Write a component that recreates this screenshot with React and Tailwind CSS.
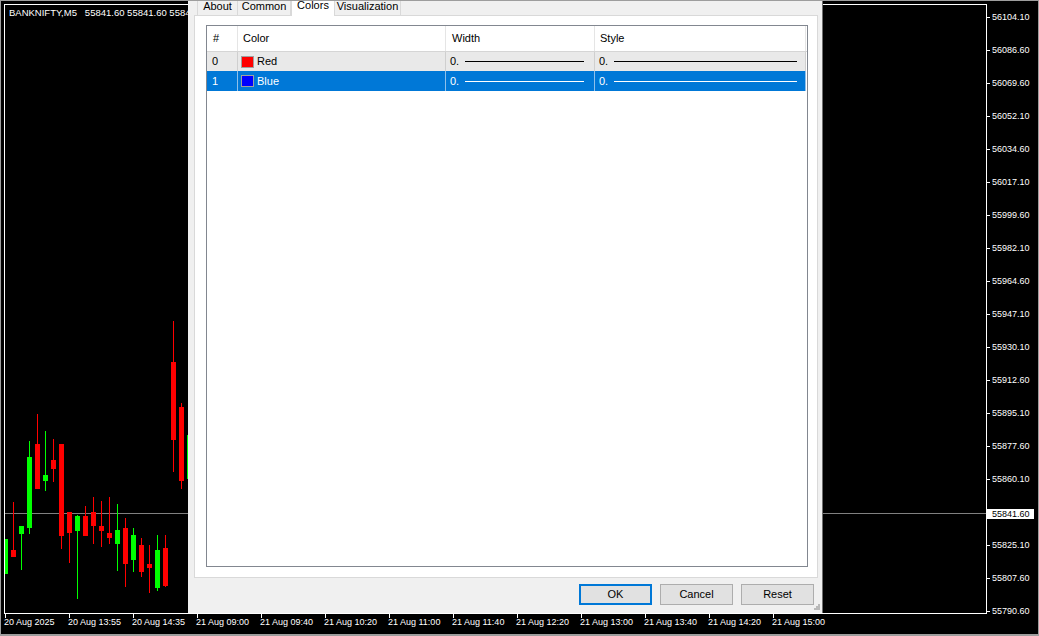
import React from 'react'

const PRICES = [
  '56104.10', '56086.60', '56069.60', '56052.10', '56034.60', '56017.10', '55999.60',
  '55982.10', '55964.60', '55947.10', '55930.10', '55912.60', '55895.10', '55877.60',
  '55860.10', null, '55825.10', '55807.60', '55790.60'
]

const TIMES = [
  '20 Aug 2025', '20 Aug 13:55', '20 Aug 14:35', '21 Aug 09:00', '21 Aug 09:40', '21 Aug 10:20',
  '21 Aug 11:00', '21 Aug 11:40', '21 Aug 12:20', '21 Aug 13:00', '21 Aug 13:40', '21 Aug 14:20',
  '21 Aug 15:00'
]

// [left x, body top, body bottom, wick top, wick bottom, up?]
const CANDLES = [
  [3, 539, 574, 539, 574, true],
  [11, 550, 557, 502, 557, false],
  [19, 526, 534, 526, 570, true],
  [27, 457, 528, 441, 534, true],
  [35, 444, 489, 414, 489, false],
  [43, 475, 481, 431, 491, true],
  [51, 460, 469, 439, 482, false],
  [59, 444, 536, 444, 549, false],
  [67, 512, 533, 512, 563, false],
  [75, 516, 531, 515, 599, true],
  [83, 516, 536, 506, 536, false],
  [91, 512, 526, 497, 544, false],
  [99, 526, 531, 501, 547, false],
  [107, 533, 538, 497, 544, false],
  [115, 530, 544, 504, 571, true],
  [123, 528, 564, 518, 587, false],
  [131, 535, 560, 528, 572, true],
  [139, 545, 572, 538, 577, false],
  [147, 564, 568, 545, 593, false],
  [155, 550, 588, 535, 591, true],
  [163, 548, 586, 535, 587, false],
  [171, 362, 440, 321, 472, false],
  [179, 407, 481, 403, 489, false],
  [187, 435, 479, 435, 479, true]
]

const ROWS = [
  { n: '0', name: 'Red', swatch: 'bg-[#ff0000]', selected: false, h: 'h-[19px]' },
  { n: '1', name: 'Blue', swatch: 'bg-[#0000ff]', selected: true, h: 'h-[20px]' }
]

function Candles() {
  return (
    <svg className="absolute inset-0" width="981" height="608" viewBox="5 5 981 608" shapeRendering="crispEdges">
      <rect x="5" y="513" width="981" height="1" fill="#808080" />
      {CANDLES.map(([x, bt, bb, wt, wb, up], i) => {
        const fill = up ? '#00ff00' : '#ff0000'
        return (
          <g key={i}>
            <rect x={x + 2} y={wt} width="1" height={wb - wt} fill={fill} />
            <rect x={x} y={bt} width="5" height={bb - bt} fill={fill} />
          </g>
        )
      })}
    </svg>
  )
}

function Tab({ label, width, active }) {
  if (active) {
    return (
      <div className={`${width} h-[16px] -mb-px relative z-10 bg-white border-x border-[#d9d9d9] flex justify-center items-start`}>
        <span className="leading-[11px]">{label}</span>
      </div>
    )
  }
  return (
    <div className={`${width} h-[15px] bg-[#f0f0f0] border-r border-[#d9d9d9] flex justify-center items-start`}>
      <span className="leading-[11px] mt-[1px]">{label}</span>
    </div>
  )
}

function ColorRow({ row }) {
  const sel = row.selected
  const sep = sel ? 'border-[#8fc0ea]' : 'border-[#cfcfcf]'
  const line = sel ? 'bg-white' : 'bg-black'
  return (
    <div className={`flex ${row.h} w-[599px] ${sel ? 'bg-[#0078d7] text-white' : 'bg-[#e9e9e9] text-black'}`}>
      <div className={`w-[31px] border-r ${sep} flex items-center pl-[5px]`}>{row.n}</div>
      <div className={`w-[208px] border-r ${sep} flex items-center pl-[3px]`}>
        <span className={`w-[13px] h-[12px] border border-[#a0a0a0] ${row.swatch}`} />
        <span className="ml-[3px]">{row.name}</span>
      </div>
      <div className={`w-[149px] border-r ${sep} flex items-center pl-[4px]`}>
        <span>0.</span>
        <span className={`flex-1 h-px ml-[6px] mr-[10px] ${line}`} />
      </div>
      <div className={`w-[211px] border-r ${sep} flex items-center pl-[4px]`}>
        <span>0.</span>
        <span className={`flex-1 h-px ml-[6px] mr-[8px] ${line}`} />
      </div>
    </div>
  )
}

function Dialog() {
  return (
    <div className="absolute left-[187px] top-[-1px] w-[635px] h-[613px] bg-[#f0f0f0] border-r border-[#6f6f6f] flex flex-col text-[11px] text-black font-['Liberation_Sans',Arial,sans-serif]">
      {/* Tabs */}
      <div className="flex items-end h-[15px] pl-[9px]">
        <div className="border-l border-[#d9d9d9] flex items-end">
          <Tab label="About" width="w-[40px]" />
          <Tab label="Common" width="w-[53px]" />
        </div>
        <Tab label="Colors" width="w-[44px]" active />
        <Tab label="Visualization" width="w-[66px]" />
      </div>

      {/* Panel */}
      <div className="ml-[6px] w-[624px] h-[563px] bg-white border border-[#d9d9d9] pt-[9px] pl-[11px]">
        <div className="w-[602px] h-[542px] border border-[#828790] bg-white flex flex-col">
          <div className="flex h-[26px] w-[600px] border-b border-[#d5d5d5]">
            <div className="w-[31px] border-r border-[#e5e5e5] flex items-center pl-[6px]">#</div>
            <div className="w-[208px] border-r border-[#e5e5e5] flex items-center pl-[5px]">Color</div>
            <div className="w-[149px] border-r border-[#e5e5e5] flex items-center pl-[6px]">Width</div>
            <div className="w-[211px] border-r border-[#e5e5e5] flex items-center pl-[5px]">Style</div>
          </div>
          {ROWS.map(r => <ColorRow key={r.n} row={r} />)}
        </div>
      </div>

      {/* Buttons */}
      <div className="flex justify-end gap-[8px] pr-[8px] mt-[6px]">
        <button className="w-[73px] h-[21px] bg-[#e1e1e1] border-2 border-[#0078d7] flex items-center justify-center">OK</button>
        <button className="w-[73px] h-[21px] bg-[#e1e1e1] border border-[#adadad] flex items-center justify-center">Cancel</button>
        <button className="w-[73px] h-[21px] bg-[#e1e1e1] border border-[#adadad] flex items-center justify-center">Reset</button>
      </div>

      {/* Size grip */}
      <svg className="absolute right-[2px] bottom-[2px]" width="7" height="7" shapeRendering="crispEdges">
        {[[5, 0], [3, 2], [5, 2], [1, 4], [3, 4], [5, 4]].map(([x, y], i) => (
          <rect key={i} x={x} y={y} width="2" height="2" fill="#b9b9b9" />
        ))}
      </svg>
    </div>
  )
}

export default function App() {
  return (
    <div className="relative w-[1039px] h-[636px] bg-black border-l border-r border-t border-b-2 border-[#9d9d9d] pl-[3px] pt-[3px] overflow-hidden font-['Liberation_Sans',Arial,sans-serif] text-[9px] text-white">
      <div className="flex h-[610px]">
        {/* Plot */}
        <div className="relative w-[983px] h-[610px] border border-white overflow-hidden">
          <Candles />
          <div className="relative pl-[4px] pt-[3px] text-[9.5px] leading-[10px] whitespace-pre">
            BANKNIFTY,M5   55841.60 55841.60 5584
          </div>
        </div>

        {/* Price axis */}
        <div className="relative flex-1">
          <div className="flex flex-col -mt-[3.5px]">
            {PRICES.map((p, i) => (
              <div key={i} className="h-[33px] flex items-center">
                {p && <span className="w-[3px] h-px bg-white" />}
                {p && <span className="ml-[2px] leading-[10px]">{p}</span>}
              </div>
            ))}
          </div>
          <div className="absolute left-0 top-[505px] h-[10px] w-[47px] bg-white text-black pl-[5px] leading-[10px]">55841.60</div>
        </div>
      </div>

      {/* Time axis */}
      <div className="flex h-[20px]">
        {TIMES.map(t => (
          <div key={t} className="w-[64px] shrink-0 flex flex-col">
            <span className="ml-[1px] w-px h-[4px] bg-white" />
            <span className="whitespace-nowrap leading-[9px]">{t}</span>
          </div>
        ))}
      </div>

      <Dialog />
    </div>
  )
}
